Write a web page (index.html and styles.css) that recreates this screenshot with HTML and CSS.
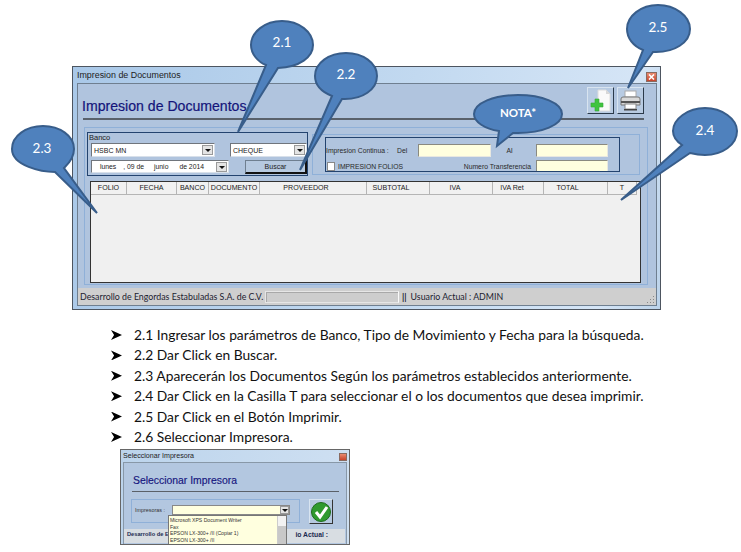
FILE: index.html
```html
<!DOCTYPE html>
<html lang="es">
<head>
<meta charset="utf-8">
<title>Impresion de Documentos</title>
<link rel="stylesheet" href="styles.css">
</head>
<body>
<main class="page">
  <section class="win main-win">
    <div class="titlebar">
      <span class="title-text">Impresion de Documentos</span>
      <span class="close"><svg width="7" height="6" viewBox="0 0 7 6"><path d="M1 0.5 L6 5.5 M6 0.5 L1 5.5" stroke="#fff" stroke-width="1.6"/></svg></span>
    </div>
    <div class="panel">
      <header class="head">
        <h1 class="heading">Impresion de Documentos</h1>
        <div class="tools">
          <button class="tool">
            <svg width="25" height="25" viewBox="0 0 25 25">
              <path d="M10 2 H18 L22 6 V23 H10 Z" fill="#fafafa" stroke="#dcdcdc"/>
              <path d="M18 2 V6 H22 Z" fill="#d8d8d8"/>
              <path d="M7 11 H11 V15 H15 V19 H11 V23 H7 V19 H3 V15 H7 Z" fill="#3fc43f" stroke="#35a835" stroke-width=".6"/>
            </svg>
          </button>
          <button class="tool">
            <svg width="25" height="25" viewBox="0 0 25 25">
              <rect x="7" y="3" width="11" height="6" fill="#fff" stroke="#aaa"/>
              <path d="M3 11 Q3 9 5 9 H20 Q22 9 22 11 V17 H3 Z" fill="#d9d9d9" stroke="#777"/>
              <rect x="3" y="13" width="19" height="2" fill="#555"/>
              <rect x="7" y="16" width="11" height="5" fill="#fff" stroke="#888"/>
              <rect x="6" y="21" width="13" height="1.5" fill="#444"/>
            </svg>
          </button>
        </div>
      </header>
      <div class="rule"></div>
      <div class="outer">
        <div class="filters">
          <div class="banco">
            <div class="legend">Banco</div>
            <div class="banco-row first">
              <div class="combo combo-bank"><span>HSBC MN</span><i class="arrow"></i></div>
              <div class="combo combo-type"><span>CHEQUE</span><i class="arrow"></i></div>
            </div>
            <div class="banco-row second">
              <div class="combo combo-date"><span class="d1">lunes</span><span class="d2">, 09 de</span><span class="d3">junio</span><span class="d4">de 2014</span><i class="arrow small"></i></div>
              <button class="search">Buscar</button>
            </div>
          </div>
          <div class="print-box">
            <div class="print-group">
              <span class="lab">Impresion Continua :</span>
              <span class="lab">Del</span>
              <span class="input"></span>
              <span class="lab lab-al">Al</span>
              <span class="input"></span>
              <span class="check-wrap"><i class="check"></i><span class="lab">IMPRESION FOLIOS</span></span>
              <span class="lab lab-num">Numero Transferencia</span>
              <span class="input input-clip"></span>
            </div>
          </div>
        </div>
        <div class="grid">
          <div class="grid-head">
            <span>FOLIO</span><span>FECHA</span><span>BANCO</span><span>DOCUMENTO</span><span class="off-14">PROVEEDOR</span><span class="off-14">SUBTOTAL</span><span class="off-12">IVA</span><span class="off-12">IVA Ret</span><span class="off-16">TOTAL</span><span>T</span>
          </div>
        </div>
      </div>
      <footer class="status">
        <span class="company">Desarrollo de Engordas Estabuladas S.A. de C.V.</span>
        <span class="progress"></span>
        <span class="bars">||</span>
        <span>Usuario Actual : ADMIN</span>
        <span class="grip"></span>
      </footer>
    </div>
  </section>

  <ul class="steps">
    <li>2.1 Ingresar los parámetros de Banco, Tipo de Movimiento y Fecha para la búsqueda.</li>
    <li>2.2 Dar Click en Buscar.</li>
    <li>2.3 Aparecerán los Documentos Según los parámetros establecidos anteriormente.</li>
    <li>2.4 Dar Click en la Casilla T para seleccionar el o los documentos que desea imprimir.</li>
    <li>2.5 Dar Click en el Botón Imprimir.</li>
    <li>2.6 Seleccionar Impresora.</li>
  </ul>

  <section class="win small-win">
    <div class="titlebar small-title">
      <span class="title-text">Seleccionar Impresora</span>
      <span class="close small-close"></span>
    </div>
    <div class="small-panel">
      <h2 class="small-heading">Seleccionar Impresora</h2>
      <div class="small-rule"></div>
      <div class="small-body">
        <div class="small-group">
          <span class="small-label">Impresoras :</span>
          <div class="small-select"><i class="arrow small"></i></div>
        </div>
        <button class="ok">
          <svg width="22" height="22" viewBox="0 0 22 22">
            <circle cx="11" cy="11" r="9.5" fill="#2f9a2f" stroke="#1d6b1d"/>
            <path d="M6 11 L10 16 L17 6" fill="none" stroke="#fff" stroke-width="3"/>
          </svg>
        </button>
      </div>
      <div class="small-status"><span class="small-company">Desarrollo de E</span><span>io Actual :</span></div>
    </div>
    <div class="dropdown">
      <div class="dropdown-list">
        <span>Microsoft XPS Document Writer</span>
        <span>Fax</span>
        <span>EPSON LX-300+ /II (Copiar 1)</span>
        <span>EPSON LX-300+ /II</span>
        <span>EPSON</span>
      </div>
      <div class="dropdown-scroll"></div>
    </div>
  </section>

  <svg class="callouts" width="741" height="552" viewBox="0 0 741 552">
    <g class="bubble">
      <path d="M282 21 C299 21 313 32 313 45 C313 57 300 67 278 68 L238 132 L266 65 C258 62 251 54 251 45 C251 32 265 21 282 21 Z"/>
      <path d="M346 53 C363 53 377 63 377 76 C377 89 363 100 342 99 L300 170 L332 96 C322 92 315 85 315 76 C315 63 329 53 346 53 Z"/>
      <path d="M43 126 C60 126 74 136 74 149 C74 159 67 165 64 168 L97 213 L55 172 C42 172 12 166 12 149 C12 136 26 126 43 126 Z"/>
      <path d="M705 108 C722 108 737 119 737 131 C737 145 722 155 705 155 C699 155 694 154 690 153 L621 200 L682 145 C676 141 673 136 673 131 C673 119 688 108 705 108 Z"/>
      <path d="M658 5 C675 5 690 16 690 29 C690 42 675 53 653 52 L628 88 L643 50 C633 46 627 38 627 29 C627 16 641 5 658 5 Z"/>
      <path d="M518 95 C542 95 562 103 562 114 C562 125 542 133 518 133 L513 133 L497 146 L499 131 C485 129 474 122 474 114 C474 103 494 95 518 95 Z"/>
    </g>
    <g class="bubble-text">
      <text x="282" y="47">2.1</text>
      <text x="346" y="79">2.2</text>
      <text x="42" y="153">2.3</text>
      <text x="705" y="135">2.4</text>
      <text x="658" y="32">2.5</text>
      <text class="nota" x="518" y="117">NOTA*</text>
    </g>
  </svg>
</main>
</body>
</html>
```
FILE: styles.css
```css
* { box-sizing: border-box; }
html, body { margin: 0; padding: 0; background: #fff; }
body { width: 741px; height: 552px; overflow: hidden; font-family: "Liberation Sans", Arial, sans-serif; }
.page { position: relative; width: 741px; height: 552px; padding-top: 66px; overflow: hidden; }
button { font: inherit; padding: 0; }

.win { border: 1px solid #4d5560; background: linear-gradient(100deg, #a9c8e8 0%, #c2d9f0 55%, #d5e5f6 90%, #bcd3ea 100%); }
.main-win { width: 589px; height: 244px; margin-left: 72px; padding: 0 3px 0 4px; }
.titlebar { display: flex; align-items: center; justify-content: space-between; height: 16px; }
.title-text { font-size: 8.9px; color: #222; }
.close { display: flex; align-items: center; justify-content: center; width: 11px; height: 10px; margin-top: 4px; background: linear-gradient(#e88a70, #c8442c); border: 1px solid #8a6a60; }

.panel { width: 580px; height: 223px; background: #b0c4de; border: 1px solid #6f7f90; display: flex; flex-direction: column; }
.head { height: 34px; display: flex; justify-content: space-between; align-items: flex-start; padding: 3px 12px 0 4px; }
.heading { margin: 11px 0 0; font-size: 14.1px; line-height: 17px; font-weight: 400; color: #14147a; -webkit-text-stroke: .2px #14147a; }
.tools { display: flex; gap: 3px; }
.tool { width: 27px; height: 27px; display: flex; align-items: center; justify-content: center; background: #b8cbe2; border: 1px solid; border-color: #d8e4f0 #2b3a4a #2b3a4a #d8e4f0; }
.rule { width: 561px; height: 2px; margin-left: 5px; background: #59616b; }

.outer { width: 564px; height: 158px; margin: 7px 0 0 6px; border: 1px solid #8fb0d8; padding: 4px 2px 0; }
.filters { display: flex; height: 44px; }
.banco { width: 221px; height: 44px; border: 1px solid #23436f; padding: 0 0 0 3px; }
.legend { font-size: 7.5px; line-height: 9px; margin-left: -2px; color: #222; height: 10px; }
.banco-row { display: flex; }
.first { gap: 15px; }
.second { gap: 16px; margin-top: 3px; }
.combo { display: flex; align-items: center; position: relative; height: 14px; background: #fff; border: 1px solid; border-color: #70757c #d8e0ea #d8e0ea #70757c; font-size: 7px; color: #222; padding-left: 2px; overflow: hidden; white-space: nowrap; }
.combo-bank { width: 124px; }
.combo-type { width: 77px; }
.combo-date { width: 138px; height: 13px; font-size: 6.8px; }
.d1 { margin-left: 6px; }
.d2 { margin-left: 7px; }
.d3 { margin-left: 10px; }
.d4 { margin-left: 11px; }
.arrow { position: absolute; right: 1px; top: 1px; width: 11px; height: 10px; background: #e4e4e4; border: 1px solid #9a9a9a; display: block; }
.arrow::after { content: ""; position: absolute; left: 2px; top: 3px; border: 3px solid transparent; border-top: 3px solid #111; border-bottom: 0; }
.search { width: 62px; height: 14px; background: #b6c9e0; border: 1px solid; border-color: #6f7f90 #111 #111 #6f7f90; border-width: 1px 2px 2px 1px; font-size: 7px; line-height: 10px; color: #222; }

.print-box { width: 328px; height: 41px; margin: 2px 0 0 4px; border: 1px solid #8fb0d8; padding: 2px 0 0 12px; }
.print-group { width: 295px; height: 35px; border: 1px solid #23436f; display: grid; grid-template-columns: 71px 21px 73px 45px 72px; grid-template-rows: 13px 13px; row-gap: 3px; padding: 6px 0 0 0; font-size: 6.8px; color: #2a2a2a; align-items: center; overflow: hidden; }
.lab { white-space: nowrap; }
.lab-al { text-align: center; padding-right: 8px; }
.input { height: 13px; background: #ffffdf; border: 1px solid; border-color: #8a8a80 #e8e8e0 #e8e8e0 #8a8a80; }
.input-clip { height: 14px; margin-top: 1px; }
.check-wrap { grid-column: span 2; display: flex; align-items: center; gap: 3px; margin-left: 1px; }
.check { width: 8px; height: 9px; background: #fff; border: 1px solid #888; display: block; }
.lab-num { grid-column: span 2; text-align: right; padding-right: 5px; }

.grid { width: 551px; height: 102px; margin: 5px 0 0 3px; background: #f0f0f0; border: 1px solid #333; }
.grid-head { display: grid; grid-template-columns: 36px 50px 32px 51px 107px 63px 63px 51px 64px 29px; height: 13px; width: 546px; }
.grid-head span { font-size: 7.1px; line-height: 12px; text-align: center; color: #222; border-right: 1px solid #b5b5b5; border-bottom: 1px solid #b5b5b5; background: #f1f1f1; white-space: nowrap; }
.grid-head .off-12 { padding-right: 12px; }
.grid-head .off-14 { padding-right: 14px; }
.grid-head .off-16 { padding-right: 16px; }

.status { display: flex; align-items: center; position: relative; width: 578px; height: 17px; margin-top: 3px; background: #cfcfcf; padding-left: 2px; font-family: Lato, "Liberation Sans", sans-serif; font-size: 8.8px; color: #1c1c30; white-space: nowrap; }
.company { width: 185px; }
.progress { width: 134px; height: 12px; background: #cdcdcd; border: 1px solid #e6e6e6; border-right-color: #fafafa; box-shadow: inset 1px 1px 0 #a8a8a8; }
.bars { margin: 0 4px 0 3px; font-weight: 700; }
.grip { position: absolute; right: 2px; bottom: 2px; width: 8px; height: 8px; background: radial-gradient(circle, #888 0 .8px, transparent 1px) 0 0 / 3px 3px; clip-path: polygon(100% 0, 100% 100%, 0 100%); }

.steps { list-style: none; margin: 15px 0 0 134px; padding: 0; font-family: Lato, "Liberation Sans", sans-serif; font-size: 13.8px; color: #111; }
.steps li { position: relative; height: 20.4px; line-height: 20.4px; white-space: nowrap; }
.steps li::before { content: ""; position: absolute; left: -23px; top: 5px; width: 11px; height: 10px; background: #000; clip-path: polygon(0 0, 100% 50%, 0 100%, 28% 50%); }

.small-win { position: relative; width: 230px; height: 96px; margin: 2px 0 0 120px; padding: 0 2px 0 2px; overflow: hidden; border-color: #666; background: linear-gradient(100deg, #bcd4ec, #cfe0f2); }
.small-title { height: 12px; }
.small-title .title-text { font-size: 7.1px; }
.small-close { width: 8px; height: 8px; margin-top: 2px; }
.small-panel { height: 84px; background: #b3c7e0; border: 1px solid #8898a8; padding: 11px 0 0 9px; }
.small-heading { margin: 0; font-size: 10.4px; line-height: 14px; font-weight: 400; color: #16167e; -webkit-text-stroke: .15px #16167e; }
.small-rule { width: 207px; height: 1px; margin: 3px 0 0 -1px; background: #5a6068; }
.small-body { display: flex; margin: 7px 0 0 -2px; gap: 9px; }
.small-group { display: flex; width: 169px; height: 24px; border: 1px solid #8fb0d8; padding: 5px 0 0 3px; gap: 7px; font-size: 5.4px; color: #333; }
.small-label { width: 30px; line-height: 10px; }
.small-select { position: relative; width: 118px; height: 10px; background: #ffffdf; border: 1px solid #888; }
.small-select .arrow { top: 0; right: 0; width: 9px; height: 8px; }
.small-select .arrow::after { left: 1px; top: 2px; }
.ok { width: 24px; height: 25px; display: flex; align-items: center; justify-content: center; background: #b6c9e0; border: 1px solid; border-color: #d8e4f0 #333 #333 #d8e4f0; }
.small-status { display: flex; justify-content: space-between; width: 221px; height: 14px; margin: 5px 0 0 -9px; padding: 2px 17px 0 3px; background: #d8dde2; font-size: 6.8px; font-weight: 700; color: #1c2a50; white-space: nowrap; }
.small-company { font-size: 5.7px; }

.dropdown { position: absolute; left: 47px; top: 65px; width: 119px; height: 30px; display: flex; background: #ffffdf; border: 1px solid #777; border-bottom: 0; overflow: hidden; }
.dropdown-list { flex: 1; display: flex; flex-direction: column; padding: 1px 0 0 1px; font-size: 5.1px; line-height: 6.5px; color: #333; white-space: nowrap; }
.dropdown-scroll { width: 9px; background: linear-gradient(#f2f2f2 0 10px, #c8c8c8 10px 100%); border-left: 1px solid #ccc; }

.callouts { position: absolute; left: 0; top: 0; pointer-events: none; }
.bubble path { fill: #4f81bd; stroke: #385d8a; stroke-width: 2; stroke-linejoin: miter; }
.bubble-text text { font-family: Lato, "Liberation Sans", sans-serif; font-size: 13.5px; fill: #fff; text-anchor: middle; }
.bubble-text .nota { font-size: 11.5px; font-weight: 700; }
```
